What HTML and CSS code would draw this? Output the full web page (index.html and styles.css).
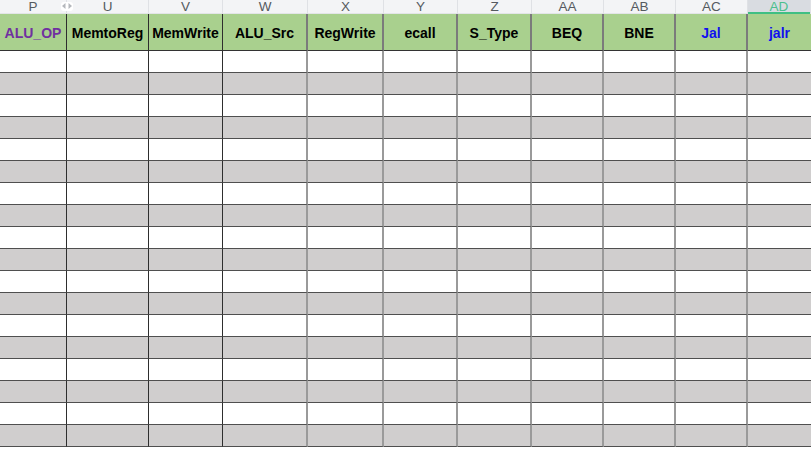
FILE: index.html
```html
<!DOCTYPE html>
<html>
<head>
<meta charset="utf-8">
<link rel="stylesheet" href="styles.css">
</head>
<body>
<div class="sheet" id="sheet">
  <div class="colhead">P<span class="hidden-mark"><svg width="12" height="8" viewBox="0 0 12 8"><path d="M4.5 1 L1 4 L4.5 7 Z" fill="#b5b8bd"/><path d="M7.5 1 L11 4 L7.5 7 Z" fill="#b5b8bd"/></svg></span></div>
  <div class="colhead">U</div>
  <div class="colhead">V</div>
  <div class="colhead">W</div>
  <div class="colhead">X</div>
  <div class="colhead">Y</div>
  <div class="colhead">Z</div>
  <div class="colhead">AA</div>
  <div class="colhead">AB</div>
  <div class="colhead">AC</div>
  <div class="colhead sel">AD</div>

  <div class="hd c1 purple">ALU_OP</div>
  <div class="hd c2">MemtoReg</div>
  <div class="hd c3">MemWrite</div>
  <div class="hd">ALU_Src</div>
  <div class="hd">RegWrite</div>
  <div class="hd">ecall</div>
  <div class="hd">S_Type</div>
  <div class="hd">BEQ</div>
  <div class="hd">BNE</div>
  <div class="hd blue">Jal</div>
  <div class="hd blue last">jalr</div>
</div>
<script>
  var s = document.getElementById('sheet');
  for (var r = 0; r < 18; r++) {
    for (var c = 0; c < 11; c++) {
      var d = document.createElement('div');
      d.className = 'cell ' + (r % 2 ? 'gray' : 'white') + ' k' + (c + 1);
      s.appendChild(d);
    }
  }
</script>
</body>
</html>
```
FILE: styles.css
```css
html, body {
  margin: 0;
  padding: 0;
  background: #ffffff;
  overflow: hidden;
}
.sheet {
  display: grid;
  grid-template-columns: 67px 82px 74px 85px 76px 74px 74px 72px 72px 72px 1fr;
  grid-auto-rows: 22px;
  grid-template-rows: 14px 37px;
  width: 811px;
}
.colhead {
  position: relative;
  background: #f3f4f6;
  border-right: 1px solid #dfe1e5;
  box-shadow: inset 0 -1px 0 #e3e5e8;
  font-family: "Liberation Sans", Arial, sans-serif;
  font-size: 13.5px;
  line-height: 13px;
  color: #555a60;
  text-align: center;
}
.colhead.sel {
  background: #d9dce1;
  color: #4cbf8e;
  box-shadow: inset 0 -2px 0 #3fbf83;
}
.hidden-mark {
  position: absolute;
  right: -7px;
  top: 2px;
  width: 12px;
  height: 9px;
  background: #ffffff;
  border-radius: 3px;
  z-index: 2;
  line-height: 0;
}
.hd {
  background: #a9d08e;
  border-right: 2px solid #7b7b7b;
  border-bottom: 1px solid #333333;
  font-family: "Liberation Sans", Arial, sans-serif;
  font-weight: bold;
  font-size: 14px;
  color: #000000;
  display: flex;
  align-items: center;
  justify-content: center;
  padding-top: 1px;
}
.hd.c1, .hd.c2, .hd.c3 {
  border-right: 1px solid #2e2e2e;
}
.hd.last {
  border-right: none;
}
.purple { color: #7030a0; }
.blue { color: #1010f0; }
.cell {
  border-right: 2px solid #9a9a9a;
  border-bottom: 1px solid #4f4f4f;
}
.cell.k1, .cell.k2, .cell.k3 {
  border-right: 1px solid #2e2e2e;
}
.cell.k11 {
  border-right: none;
}
.white { background: #ffffff; }
.gray { background: #d0cece; }
```
